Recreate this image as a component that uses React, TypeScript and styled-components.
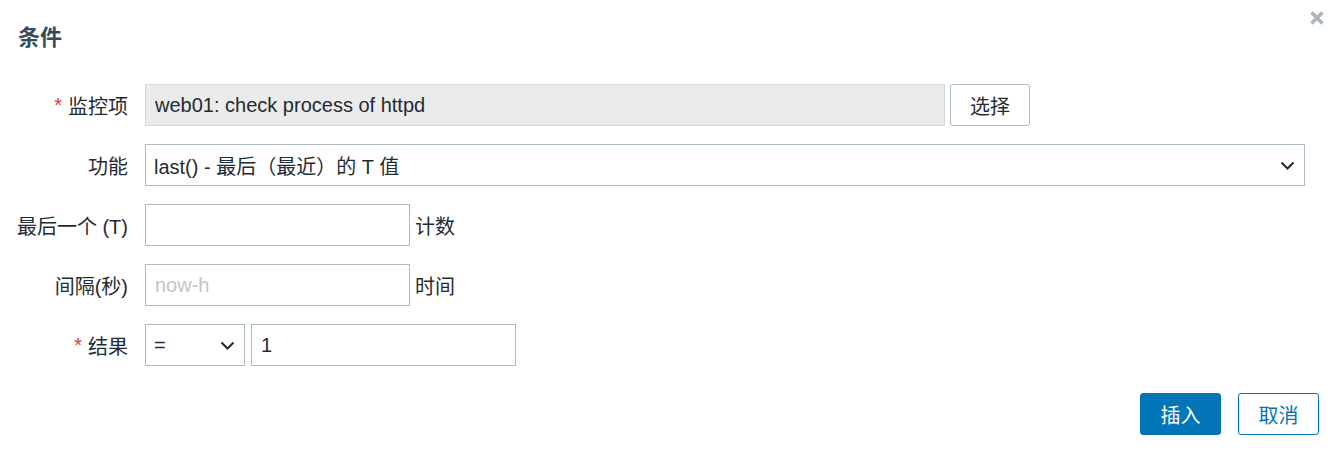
import styled, { createGlobalStyle } from "styled-components";

const GlobalStyle = createGlobalStyle`
  body {
    margin: 0;
    background: #ffffff;
    font-family: "Liberation Sans", Arial, "Noto Sans CJK SC", sans-serif;
    color: #1f2c33;
  }
`;

const Dialog = styled.div`
  width: 1336px;
  height: 453px;
  box-sizing: border-box;
  padding: 0 17px 0 18px;
  position: relative;
`;

const Header = styled.div`
  display: flex;
  align-items: center;
  height: 74px;
`;

const Title = styled.h2`
  margin: 0 0 4px;
  font-size: 22px;
  font-weight: bold;
  color: #384b58;
  font-family: "Liberation Sans", "Noto Sans CJK SC", sans-serif;
`;

const CloseButton = styled.button`
  position: absolute;
  top: 9px;
  right: 10px;
  width: 18px;
  height: 18px;
  padding: 0;
  border: 0;
  background: none;
  display: flex;
  align-items: center;
  justify-content: center;
`;

const Form = styled.div`
  display: grid;
  grid-template-columns: 110px 1fr;
  column-gap: 17px;
  row-gap: 18px;
  margin-top: 10px;
`;

const Label = styled.label`
  height: 42px;
  display: flex;
  align-items: center;
  justify-content: flex-end;
  font-size: 20px;
  white-space: nowrap;
`;

const Asterisk = styled.span`
  color: #e33734;
  margin-right: 6px;
`;

const Field = styled.div`
  display: flex;
  align-items: center;
  gap: 5px;
`;

const TextInput = styled.input<{ $width: number; $readOnlyLook?: boolean }>`
  box-sizing: border-box;
  width: ${(p) => p.$width}px;
  height: 42px;
  padding: 0 9px;
  font-family: inherit;
  font-size: 20px;
  color: #1f2c33;
  background: ${(p) => (p.$readOnlyLook ? "#ebebeb" : "#ffffff")};
  border: 1px solid ${(p) => (p.$readOnlyLook ? "#d3d9dc" : "#acbbc2")};
  border-radius: 0;
  outline: none;

  &::placeholder {
    color: #c5c5c5;
  }
`;

const SelectBox = styled.div<{ $width: number }>`
  box-sizing: border-box;
  width: ${(p) => p.$width}px;
  height: 42px;
  padding: 0 9px 0 8px;
  display: flex;
  align-items: center;
  justify-content: space-between;
  border: 1px solid #acbbc2;
  font-size: 20px;
  background: #ffffff;
`;

const SecondaryButton = styled.button`
  box-sizing: border-box;
  width: 80px;
  height: 42px;
  border: 1px solid #acbbc2;
  border-radius: 3px;
  background: #ffffff;
  font-family: inherit;
  font-size: 20px;
  color: #1f2c33;
`;

const Suffix = styled.span`
  font-size: 20px;
`;

const Footer = styled.div`
  display: flex;
  justify-content: flex-end;
  gap: 17px;
  margin-top: 27px;
`;

const ActionButton = styled.button<{ $primary?: boolean }>`
  box-sizing: border-box;
  width: 81px;
  height: 42px;
  border-radius: 3px;
  border: 1px solid #0275b8;
  background: ${(p) => (p.$primary ? "#0275b8" : "#ffffff")};
  color: ${(p) => (p.$primary ? "#ffffff" : "#0275b8")};
  font-family: inherit;
  font-size: 20px;
`;

const Chevron = () => (
  <svg width="15" height="9" viewBox="0 0 15 9" fill="none">
    <path d="M1.5 1.5 L7.5 7.5 L13.5 1.5" stroke="#1f2c33" strokeWidth="2" />
  </svg>
);

const App = () => (
  <Dialog>
    <GlobalStyle />
    <Header>
      <Title>条件</Title>
      <CloseButton aria-label="close">
        <svg width="16" height="16" viewBox="0 0 16 16">
          <path d="M2.5 2.5 L13.5 13.5 M13.5 2.5 L2.5 13.5" stroke="#acb5bb" strokeWidth="3.6" />
        </svg>
      </CloseButton>
    </Header>
    <Form>
      <Label>
        <Asterisk>*</Asterisk>监控项
      </Label>
      <Field>
        <TextInput $width={800} $readOnlyLook readOnly value="web01: check process of httpd" />
        <SecondaryButton>选择</SecondaryButton>
      </Field>

      <Label>功能</Label>
      <Field>
        <SelectBox $width={1160}>
          <span>last() - 最后（最近）的 T 值</span>
          <Chevron />
        </SelectBox>
      </Field>

      <Label>最后一个 (T)</Label>
      <Field>
        <TextInput $width={265} defaultValue="" />
        <Suffix>计数</Suffix>
      </Field>

      <Label>间隔(秒)</Label>
      <Field>
        <TextInput $width={265} placeholder="now-h" />
        <Suffix>时间</Suffix>
      </Field>

      <Label>
        <Asterisk>*</Asterisk>结果
      </Label>
      <Field>
        <SelectBox $width={100}>
          <span>=</span>
          <Chevron />
        </SelectBox>
        <TextInput $width={265} defaultValue="1" style={{ marginLeft: 1 }} />
      </Field>
    </Form>
    <Footer>
      <ActionButton $primary>插入</ActionButton>
      <ActionButton>取消</ActionButton>
    </Footer>
  </Dialog>
);

export default App;
